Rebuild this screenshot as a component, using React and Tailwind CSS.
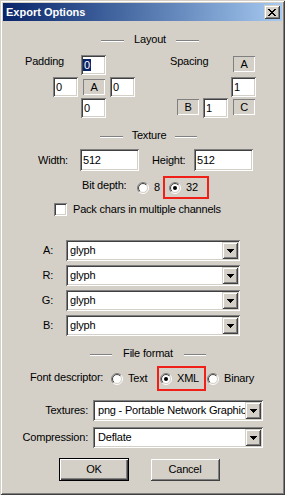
import React, { useId } from 'react';

const sunken = "shadow-[inset_1px_1px_#808080,inset_-1px_-1px_#ffffff,inset_2px_2px_#404040,inset_-2px_-2px_#d4d0c8]";
const raised = "shadow-[inset_1px_1px_#d4d0c8,inset_-1px_-1px_#404040,inset_2px_2px_#ffffff,inset_-2px_-2px_#808080]";
const flat = "shadow-[inset_1px_1px_#808080,inset_-1px_-1px_#ffffff]";

const Edit = ({ className = '', children }) => (
  <div className={`${sunken} bg-white flex items-center pl-[3px] shrink-0 overflow-hidden whitespace-nowrap ${className}`}>
    {children}
  </div>
);

const Flat = ({ className = '', children }) => (
  <div className={`${flat} flex items-center justify-center shrink-0 ${className}`}>{children}</div>
);

const Arrow = () => (
  <svg width="7" height="4" viewBox="0 0 7 4" shapeRendering="crispEdges">
    <path d="M0 0h7v1H0zM1 1h5v1H1zM2 2h3v1H2zM3 3h1v1H3z" fill="#000" />
  </svg>
);

const Combo = ({ className = '', text, pad = 'pl-[2px]' }) => (
  <div className={`${sunken} bg-white flex items-stretch p-[2px] shrink-0 ${className}`}>
    <div className={`flex-1 flex items-center overflow-hidden whitespace-nowrap ${pad}`}>{text}</div>
    <div className={`${raised} w-[16px] bg-[#d4d0c8] flex items-center justify-center`}>
      <Arrow />
    </div>
  </div>
);

function Radio({ checked, label }) {
  const id = useId().replace(/[^a-zA-Z0-9]/g, '');
  return (
    <div className="flex items-center">
      <svg width="12" height="12" viewBox="0 0 12 12" className="shrink-0">
        <defs>
          <linearGradient id={`${id}o`} x1="0" y1="0" x2="1" y2="1">
            <stop offset="0.5" stopColor="#808080" />
            <stop offset="0.5" stopColor="#ffffff" />
          </linearGradient>
          <linearGradient id={`${id}i`} x1="0" y1="0" x2="1" y2="1">
            <stop offset="0.5" stopColor="#404040" />
            <stop offset="0.5" stopColor="#d4d0c8" />
          </linearGradient>
        </defs>
        <circle cx="6" cy="6" r="5.5" fill="none" stroke={`url(#${id}o)`} />
        <circle cx="6" cy="6" r="4.5" fill="#fff" stroke={`url(#${id}i)`} />
        {checked && <circle cx="6" cy="6" r="2" fill="#000" />}
      </svg>
      <span className="ml-[5px]">{label}</span>
    </div>
  );
}

// etched "—— Title ——" group header
const Header = ({ className, lineL, mid, lineR, children }) => (
  <div className={`flex items-start h-[13px] ${className}`}>
    <div className={`h-[2px] mt-[7px] border-t border-[#808080] border-b border-b-white ${lineL}`} />
    <div className={`text-center ${mid}`}>{children}</div>
    <div className={`h-[2px] mt-[7px] border-t border-[#808080] border-b border-b-white ${lineR}`} />
  </div>
);

const CHANNELS = ['A', 'R', 'G', 'B'];

export default function App() {
  return (
    <div className="w-[285px] h-[495px] bg-[#d4d0c8] flex flex-col overflow-hidden text-black text-[11px] leading-[13px] tracking-[-0.2px] font-['Liberation_Sans',Arial,sans-serif] shadow-[inset_1px_1px_#d4d0c8,inset_-1px_-1px_#404040,inset_2px_2px_#ffffff,inset_-2px_-2px_#808080]">
      {/* title bar */}
      <div className="mx-[3px] mt-[3px] h-[18px] flex items-start bg-gradient-to-r from-[#0a246a] to-[#a6caf0]">
        <span className="ml-[3px] mt-[3px] text-white font-bold tracking-normal">Export Options</span>
        <div className={`${raised} ml-auto mr-[2px] mt-[2px] w-[16px] h-[14px] bg-[#d4d0c8] flex items-center justify-center`}>
          <svg width="8" height="7" viewBox="0 0 8 7" shapeRendering="crispEdges">
            <path d="M0 0h2v1H0zM6 0h2v1H6zM1 1h2v1H1zM5 1h2v1H5zM2 2h4v1H2zM3 3h2v1H3zM2 4h4v1H2zM1 5h2v1H1zM5 5h2v1H5zM0 6h2v1H0zM6 6h2v1H6z" fill="#000" />
          </svg>
        </div>
      </div>

      {/* Layout */}
      <Header className="mt-[12px] ml-[101px]" lineL="w-[23px]" mid="w-[52px]" lineR="w-[23px]">Layout</Header>

      <div className="flex items-start h-[20px] mt-[9px]">
        <span className="ml-[25px] w-[56px] shrink-0">Padding</span>
        <Edit className="w-[25px] h-[20px] !pl-[2px]">
          <span className="bg-[#0a246a] text-white leading-[12px] px-[1px]">0</span>
        </Edit>
        <span className="ml-[64px] w-[63px] shrink-0">Spacing</span>
        <Flat className="w-[22px] h-[16px] mt-[1px]">A</Flat>
      </div>
      <div className="flex items-start h-[20px] mt-[2px]">
        <Edit className="ml-[53px] w-[25px] h-[20px]">0</Edit>
        <Flat className="ml-[5px] w-[22px] h-[16px] mt-[2px]">A</Flat>
        <Edit className="ml-[5px] w-[25px] h-[20px]">0</Edit>
        <Edit className="ml-[96px] w-[25px] h-[20px]">1</Edit>
      </div>
      <div className="flex items-start h-[20px] mt-[1px]">
        <Edit className="ml-[81px] w-[25px] h-[20px]">0</Edit>
        <Flat className="ml-[71px] w-[22px] h-[16px] mt-[1px]">B</Flat>
        <Edit className="ml-[4px] w-[25px] h-[20px]">1</Edit>
        <Flat className="ml-[5px] w-[22px] h-[16px] mt-[1px]">C</Flat>
      </div>

      {/* Texture */}
      <Header className="mt-[11px] ml-[100px]" lineL="w-[23px]" mid="w-[52px]" lineR="w-[22px]">Texture</Header>

      <div className="flex items-center h-[22px] mt-[7px]">
        <span className="ml-[38px] w-[42px] shrink-0">Width:</span>
        <Edit className="w-[59px] h-[22px]">512</Edit>
        <span className="ml-[13px] w-[42px] shrink-0">Height:</span>
        <Edit className="w-[59px] h-[22px]">512</Edit>
      </div>

      <div className="flex items-start h-[23px] mt-[5px]">
        <span className="ml-[82px] w-[55px] mt-[3px] shrink-0">Bit depth:</span>
        <div className="w-[26px] h-[23px] flex items-center shrink-0">
          <Radio label="8" />
        </div>
        <div className="w-[46px] h-[23px] border-2 border-[#f02018] flex items-center pl-[4px] shrink-0">
          <Radio checked label="32" />
        </div>
      </div>

      <div className="flex items-center h-[13px] mt-[4px]">
        <div className={`${sunken} ml-[54px] w-[13px] h-[13px] bg-white shrink-0`} />
        <span className="ml-[6px]">Pack chars in multiple channels</span>
      </div>

      {/* channels */}
      <div className="flex flex-col gap-[4px] mt-[24px]">
        {CHANNELS.map(c => (
          <div key={c} className="flex items-center h-[21px]">
            <span className="w-[53px] text-right shrink-0">{c}:</span>
            <Combo className="ml-[13px] w-[174px] h-[21px]" text="glyph" />
          </div>
        ))}
      </div>

      {/* File format */}
      <Header className="mt-[11px] ml-[90px]" lineL="w-[22px]" mid="w-[72px]" lineR="w-[22px]">File format</Header>

      <div className="flex items-start h-[25px] mt-[6px]">
        <span className="ml-[30px] w-[81px] mt-[5px] shrink-0 whitespace-nowrap">Font descriptor:</span>
        <div className="w-[46px] h-[25px] flex items-center shrink-0">
          <Radio label="Text" />
        </div>
        <div className="w-[49px] h-[25px] border-2 border-[#f02018] flex items-center pl-[1px] shrink-0">
          <Radio checked label="XML" />
        </div>
        <div className="ml-[1px] h-[25px] flex items-center">
          <Radio label="Binary" />
        </div>
      </div>

      <div className="flex items-center h-[21px] mt-[9px]">
        <span className="w-[88px] text-right shrink-0">Textures:</span>
        <Combo className="ml-[5px] w-[170px] h-[21px]" pad="pl-[3px]" text="png - Portable Network Graphics" />
      </div>
      <div className="flex items-center h-[21px] mt-[6px]">
        <span className="w-[88px] text-right shrink-0">Compression:</span>
        <Combo className="ml-[5px] w-[170px] h-[21px]" pad="pl-[3px]" text="Deflate" />
      </div>

      <div className="flex items-start h-[23px] mt-[10px]">
        <button className="ml-[59px] w-[70px] h-[23px] border border-black bg-[#d4d0c8] shadow-[inset_1px_1px_#ffffff,inset_-1px_-1px_#404040,inset_-2px_-2px_#808080] flex items-center justify-center">
          OK
        </button>
        <button className={`${raised} ml-[21px] w-[70px] h-[23px] bg-[#d4d0c8] flex items-center justify-center`}>
          Cancel
        </button>
      </div>
    </div>
  );
}
